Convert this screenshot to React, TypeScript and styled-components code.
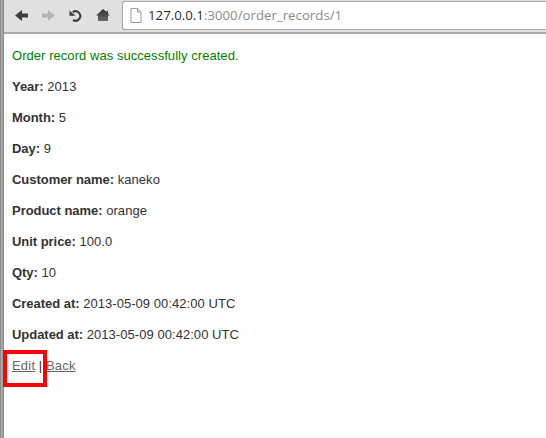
import React from 'react'
import styled, { createGlobalStyle } from 'styled-components'

const GlobalStyle = createGlobalStyle`
    html, body {
        margin: 0;
        padding: 0;
        background: #fff;
    }
`

const fields = [
    { label: 'Year', value: '2013' },
    { label: 'Month', value: '5' },
    { label: 'Day', value: '9' },
    { label: 'Customer name', value: 'kaneko' },
    { label: 'Product name', value: 'orange' },
    { label: 'Unit price', value: '100.0' },
    { label: 'Qty', value: '10' },
    { label: 'Created at', value: '2013-05-09 00:42:00 UTC' },
    { label: 'Updated at', value: '2013-05-09 00:42:00 UTC' },
]

export default function App() {
    return (
        <Window>
            <GlobalStyle />
            <Frame />
            <Main>
                <Toolbar>
                    <NavIcon viewBox="0 0 13 13">
                        <path d="M0 6.5 L7 1 V4.5 H13 V8.5 H7 V12 Z" fill="#3c3c3c" />
                    </NavIcon>
                    <NavIcon viewBox="0 0 13 13">
                        <path d="M13 6.5 L6 1 V4.5 H0 V8.5 H6 V12 Z" fill="#b4b4b4" />
                    </NavIcon>
                    <NavIcon viewBox="0 0 13 13">
                        <path
                            d="M4 11 A4.7 4.7 0 1 0 3.8 3.2"
                            fill="none"
                            stroke="#3c3c3c"
                            strokeWidth="2.1"
                        />
                        <path d="M0.5 1.5 L6.5 6.8 H0.5 Z" fill="#3c3c3c" />
                    </NavIcon>
                    <HomeIcon viewBox="0 0 14 14">
                        <defs>
                            <linearGradient id="homeFill" x1="0" y1="0" x2="0" y2="1">
                                <stop offset="0" stopColor="#2e2e2e" />
                                <stop offset="1" stopColor="#6a6a6a" />
                            </linearGradient>
                        </defs>
                        <path
                            d="M7 1 L10.5 4 V2.8 H12 V5.4 L14 7.5 H12 V13 H2 V7.5 H0 Z"
                            fill="url(#homeFill)"
                        />
                    </HomeIcon>
                    <AddressBar>
                        <PageIcon viewBox="0 0 12 15">
                            <path
                                d="M1 .5 H7.5 L11 4 V14.5 H1 Z M7.5 .5 V4 H11"
                                fill="#fff"
                                stroke="#9a9a9a"
                            />
                        </PageIcon>
                        <Url>
                            <Host>127.0.0.1</Host>:3000/order_records/1
                        </Url>
                    </AddressBar>
                </Toolbar>
                <Page>
                    <Notice>Order record was successfully created.</Notice>
                    {fields.map((field) => (
                        <Row key={field.label}>
                            <Label>{field.label}:</Label> {field.value}
                        </Row>
                    ))}
                    <Links>
                        <Link href="#">Edit</Link> | <Link href="#">Back</Link>
                    </Links>
                    <Highlight />
                </Page>
            </Main>
        </Window>
    )
}

const Window = styled.div`
    display: flex;
    width: 546px;
    height: 438px;
    overflow: hidden;
`

const Frame = styled.div`
    width: 4px;
    flex-shrink: 0;
    background: linear-gradient(to right, #7c7c7c, #b4b4b4 45%, #7e7e7e);
`

const Main = styled.div`
    flex: 1;
    display: flex;
    flex-direction: column;
    min-width: 0;
`

const Toolbar = styled.div`
    height: 34px;
    flex-shrink: 0;
    box-sizing: border-box;
    display: flex;
    align-items: center;
    padding: 1px 0 3px 11px;
    background: #e0e0e0;
    border-bottom: 2px solid #a9a9a9;
`

const NavIcon = styled.svg`
    width: 13px;
    height: 13px;
    margin-right: 14px;
    flex-shrink: 0;
`

const HomeIcon = styled.svg`
    width: 14px;
    height: 14px;
    margin-right: 12px;
    flex-shrink: 0;
`

const AddressBar = styled.div`
    flex: 1;
    height: 29px;
    margin-right: -2px;
    box-sizing: border-box;
    display: flex;
    align-items: center;
    padding-left: 7px;
    background: #fff;
    border: 1px solid #a6a6a6;
    border-right: none;
    border-radius: 3px 0 0 3px;
`

const PageIcon = styled.svg`
    width: 12px;
    height: 15px;
    margin-right: 6px;
    flex-shrink: 0;
`

const Url = styled.span`
    font-family: 'Open Sans', sans-serif;
    font-size: 13.25px;
    color: #8c8c8c;
    white-space: nowrap;
`

const Host = styled.span`
    color: #2a2a2a;
`

const Page = styled.div`
    position: relative;
    flex: 1;
    padding: 13px 8px 0;
    background: #fff;
    font-family: 'Liberation Sans', Arial, sans-serif;
    font-size: 13px;
    line-height: 18px;
    letter-spacing: 0.05px;
    color: #333;
`

const Row = styled.p`
    margin: 0 0 13px;
`

const Label = styled.strong`
    letter-spacing: -0.04px;
`

const Notice = styled(Row)`
    color: green;
`

const Links = styled.div`
    white-space: nowrap;
`

const Link = styled.a`
    color: #666;
    letter-spacing: 0.2px;
`

const Highlight = styled.div`
    position: absolute;
    left: -1px;
    top: 316px;
    width: 36px;
    height: 29px;
    border: 4px solid #f00;
`
